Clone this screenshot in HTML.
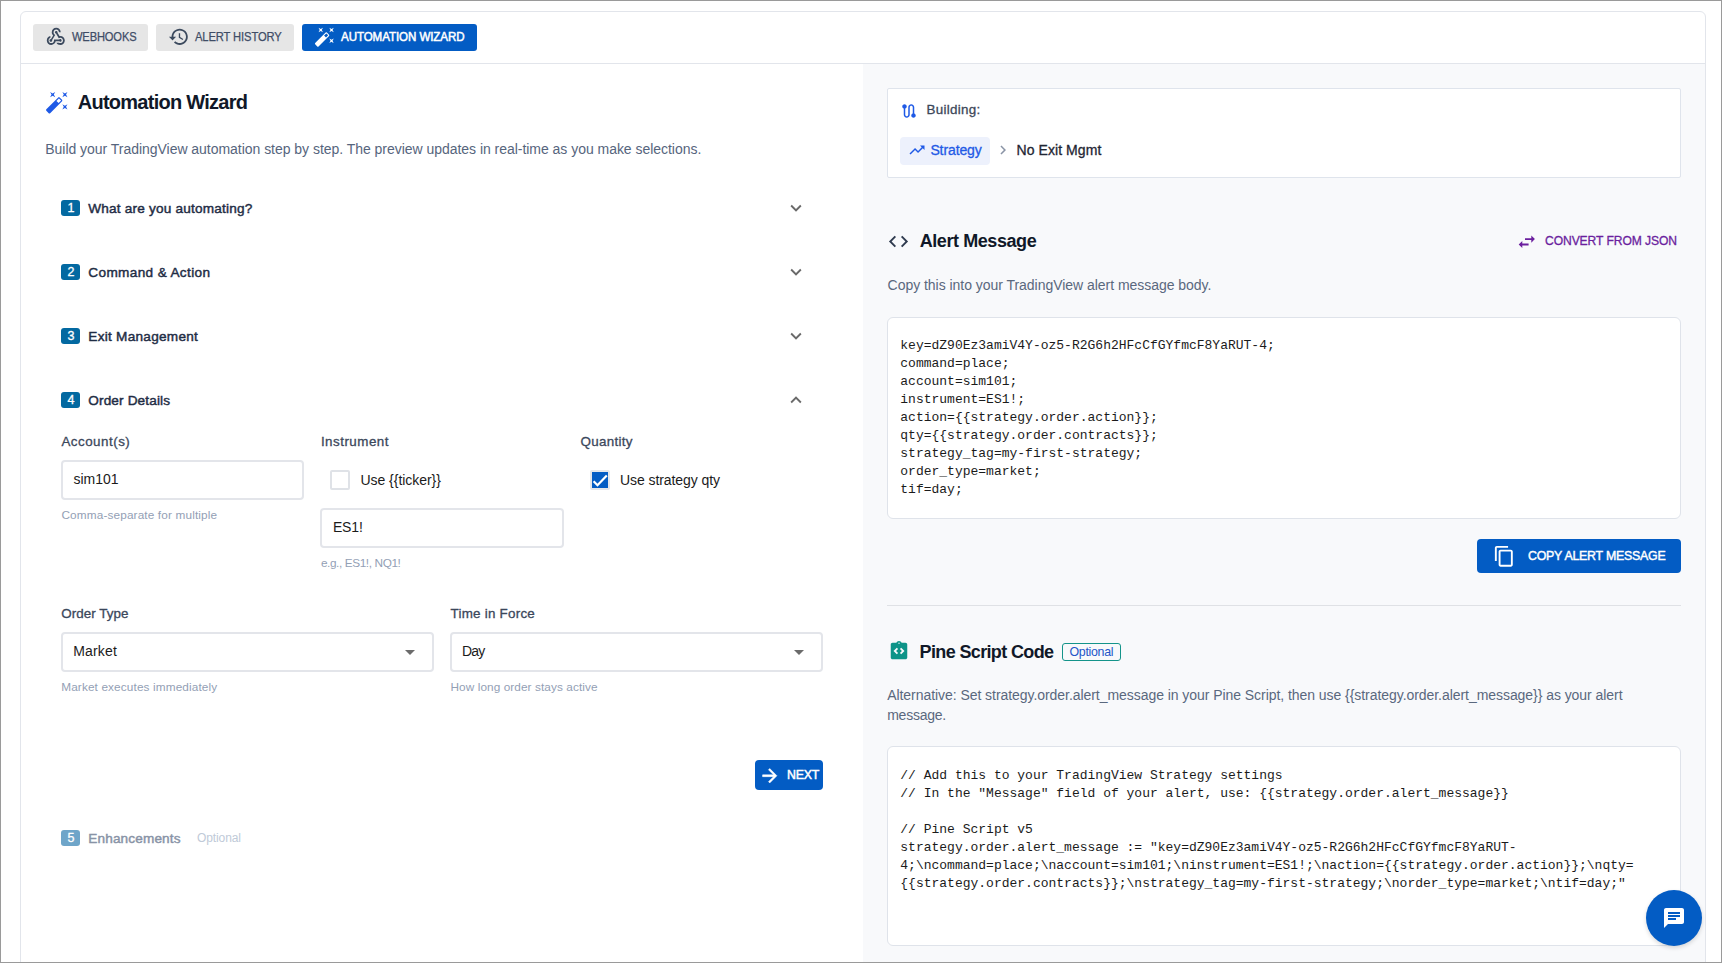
<!DOCTYPE html>
<html><head><meta charset="utf-8">
<style>
*{box-sizing:border-box;margin:0;padding:0}
html,body{width:1722px;height:963px;overflow:hidden;background:#fff;font-family:"Liberation Sans",sans-serif}
.frame{position:absolute;left:0;top:0;width:1722px;height:963px;border:1px solid #9a9a9a;overflow:hidden}
.b{position:absolute}
.t{position:absolute;white-space:pre;line-height:1}
.s{font-family:"Liberation Sans",sans-serif}
.m{font-family:"Liberation Mono",monospace}
.ic{position:absolute;display:block;overflow:visible}
</style></head>
<body>
<div class="frame"></div>
<!-- card -->
<div class="b" style="left:20px;top:11px;width:1686px;height:1000px;border:1px solid #e2e5eb;border-radius:6px;background:#fff"></div>
<div class="b" style="left:21px;top:63px;width:1684px;height:1px;background:#e2e5eb"></div>
<!-- right panel bg -->
<div class="b" style="left:863px;top:64px;width:842px;height:898px;background:#f8f9fb"></div>
<!-- tabs -->
<div class="b" style="left:33px;top:24px;width:115px;height:27px;border-radius:3px;background:#e6e6e6"></div>
<div class="b" style="left:156px;top:24px;width:138px;height:27px;border-radius:3px;background:#e6e6e6"></div>
<div class="b" style="left:302px;top:24px;width:175px;height:27px;border-radius:3px;background:#035cc4"></div>
<!-- badges -->
<div class="b" style="left:61px;top:200px;width:19px;height:16px;border-radius:3px;background:#0369a1"></div>
<div class="b" style="left:61px;top:264px;width:19px;height:16px;border-radius:3px;background:#0369a1"></div>
<div class="b" style="left:61px;top:328px;width:19px;height:16px;border-radius:3px;background:#0369a1"></div>
<div class="b" style="left:61px;top:392px;width:19px;height:16px;border-radius:3px;background:#0369a1"></div>
<div class="b" style="left:61px;top:830px;width:19px;height:16px;border-radius:3px;background:#6ea5c9"></div>
<!-- inputs -->
<div class="b" style="left:61px;top:460px;width:243px;height:40px;border:2px solid #e3e5ea;border-radius:4px;background:#fff"></div>
<div class="b" style="left:330px;top:470px;width:20px;height:20px;border:2px solid #dfe2e7;border-radius:2px;background:#fff"></div>
<div class="b" style="left:320px;top:508px;width:244px;height:40px;border:2px solid #e3e5ea;border-radius:4px;background:#fff"></div>
<div class="b" style="left:61px;top:632px;width:373px;height:40px;border:2px solid #e3e5ea;border-radius:4px;background:#fff"></div>
<div class="b" style="left:450px;top:632px;width:373px;height:40px;border:2px solid #e3e5ea;border-radius:4px;background:#fff"></div>
<svg class="ic" style="left:405px;top:650px;width:10px;height:5px" viewBox="0 0 10 5"><path fill="#6b6b6b" d="M0 0h10L5 5z"/></svg>
<svg class="ic" style="left:794px;top:650px;width:10px;height:5px" viewBox="0 0 10 5"><path fill="#6b6b6b" d="M0 0h10L5 5z"/></svg>
<!-- next -->
<div class="b" style="left:755px;top:760px;width:68px;height:30px;border-radius:4px;background:#035cc4"></div>
<!-- building card -->
<div class="b" style="left:887px;top:88px;width:794px;height:90px;border:1px solid #dfe4ec;border-radius:2px;background:#fff"></div>
<div class="b" style="left:900px;top:137px;width:90px;height:28px;border-radius:4px;background:#edf1fc"></div>
<!-- code box -->
<div class="b" style="left:887px;top:317px;width:794px;height:202px;border:1px solid #dfe3ea;border-radius:6px;background:#fff"></div>
<!-- copy btn -->
<div class="b" style="left:1477px;top:539px;width:204px;height:34px;border-radius:4px;background:#035cc4"></div>
<!-- divider -->
<div class="b" style="left:887px;top:605px;width:794px;height:1px;background:#dfe1e5"></div>
<!-- optional chip -->
<div class="b" style="left:1062px;top:643px;width:59px;height:18px;border:1px solid #14948a;border-radius:3px"></div>
<!-- pine code box -->
<div class="b" style="left:887px;top:746px;width:794px;height:200px;border:1px solid #dfe3ea;border-radius:6px;background:#fff"></div>
<!-- fab -->
<div class="b" style="left:1646px;top:890px;width:56px;height:56px;border-radius:50%;background:#035cc4;box-shadow:0 2px 4px rgba(0,0,0,.15)"></div>
<svg class="ic" style="left:1662px;top:906px;width:24px;height:24px" viewBox="0 0 24 24"><path fill="#fff" d="M20 2H4c-1.1 0-1.99.9-1.99 2L2 22l4-4h14c1.1 0 2-.9 2-2V4c0-1.1-.9-2-2-2zM6 9h12v2H6V9zm8 5H6v-2h8v2zm4-6H6V6h12v2z"/></svg>
<svg class="ic" style="left:45px;top:26px;width:21.6px;height:21.6px" viewBox="0 0 24 24"><path fill="#3c4a5e" style="" d="M10 15h5.88c.27-.31.67-.5 1.12-.5.83 0 1.5.67 1.5 1.5 0 .83-.67 1.5-1.5 1.5-.44 0-.84-.19-1.12-.5H11.9c-.46 2.28-2.48 4-4.9 4-2.76 0-5-2.24-5-5 0-2.42 1.72-4.44 4-4.9v2.07c-1.16.41-2 1.53-2 2.83 0 1.65 1.35 3 3 3s3-1.35 3-3v-1zm2.5-11c1.65 0 3 1.35 3 3h2c0-2.76-2.24-5-5-5s-5 2.24-5 5c0 1.43.6 2.71 1.55 3.62l-2.35 3.9C5.52 14.66 5 15.27 5 16c0 .83.67 1.5 1.5 1.5S8 16.830 8 16c0-.16-.02-.31-.07-.45l3.38-5.63C10.49 9.61 9.5 8.42 9.5 7c0-1.65 1.35-3 3-3zm4.5 9c-.64 0-1.23.2-1.72.54l-3.05-5.07C11.53 8.35 11 7.74 11 7c0-.83.67-1.5 1.5-1.5S14 6.17 14 7c0 .15-.02.29-.06.43l2.19 3.65c.28-.05.57-.08.87-.08 2.76 0 5 2.24 5 5s-2.24 5-5 5c-1.85 0-3.47-1.01-4.33-2.5h2.67c.48.32 1.05.5 1.66.5 1.65 0 3-1.35 3-3s-1.35-3-3-3z"/></svg>
<svg class="ic" style="left:168.1px;top:25.5px;width:21.6px;height:21.6px" viewBox="0 0 24 24"><path fill="#3c4a5e" style="" d="M13 3c-4.97 0-9 4.03-9 9H1l3.89 3.89.07.14L9 12H6c0-3.87 3.13-7 7-7s7 3.13 7 7-3.13 7-7 7c-1.93 0-3.68-.79-4.94-2.06l-1.42 1.42C8.27 19.99 10.51 21 13 21c4.97 0 9-4.03 9-9s-4.03-9-9-9zm-1 5v5l4.28 2.54.72-1.21-3.5-2.08V8H12z"/></svg>
<svg class="ic" style="left:314px;top:26px;width:21.6px;height:21.6px" viewBox="0 0 24 24"><path fill="#ffffff" style="" d="M7.5 5.6 10 7 8.6 4.5 10 2 7.5 3.4 5 2l1.4 2.5L5 7zm12 9.8L17 14l1.4 2.5L17 19l2.5-1.4L22 19l-1.4-2.5L22 14zM22 2l-2.5 1.4L17 2l1.4 2.5L17 7l2.5-1.4L22 7l-1.4-2.5zm-7.63 5.29a.9959.9959 0 0 0-1.41 0L1.29 18.96c-.39.39-.39 1.02 0 1.41l2.34 2.34c.39.39 1.02.39 1.41 0L16.7 11.05c.39-.39.39-1.02 0-1.41l-2.33-2.35zm-1.03 5.49-2.12-2.12 2.44-2.44 2.12 2.12-2.44 2.44z"/></svg>
<svg class="ic" style="left:45.1px;top:89.8px;width:24.5px;height:24.5px" viewBox="0 0 24 24"><path fill="#1f5ae6" style="" d="M7.5 5.6 10 7 8.6 4.5 10 2 7.5 3.4 5 2l1.4 2.5L5 7zm12 9.8L17 14l1.4 2.5L17 19l2.5-1.4L22 19l-1.4-2.5L22 14zM22 2l-2.5 1.4L17 2l1.4 2.5L17 7l2.5-1.4L22 7l-1.4-2.5zm-7.63 5.29a.9959.9959 0 0 0-1.41 0L1.29 18.96c-.39.39-.39 1.02 0 1.41l2.34 2.34c.39.39 1.02.39 1.41 0L16.7 11.05c.39-.39.39-1.02 0-1.41l-2.33-2.35zm-1.03 5.49-2.12-2.12 2.44-2.44 2.12 2.12-2.44 2.44z"/></svg>
<svg class="ic" style="left:785.4px;top:197.2px;width:22px;height:22px" viewBox="0 0 24 24"><path fill="#6a6a6a" style="" d="M16.59 8.59 12 13.17 7.41 8.59 6 10l6 6 6-6z"/></svg>
<svg class="ic" style="left:785.4px;top:261.2px;width:22px;height:22px" viewBox="0 0 24 24"><path fill="#6a6a6a" style="" d="M16.59 8.59 12 13.17 7.41 8.59 6 10l6 6 6-6z"/></svg>
<svg class="ic" style="left:785.4px;top:325.2px;width:22px;height:22px" viewBox="0 0 24 24"><path fill="#6a6a6a" style="" d="M16.59 8.59 12 13.17 7.41 8.59 6 10l6 6 6-6z"/></svg>
<svg class="ic" style="left:785.4px;top:388.6px;width:22px;height:22px" viewBox="0 0 24 24"><path fill="#6a6a6a" style="" d="m12 8-6 6 1.41 1.41L12 10.83l4.59 4.58L18 14z"/></svg>
<svg class="ic" style="left:900.1px;top:102px;width:18px;height:18px" viewBox="0 0 24 24"><path fill="#1f5ae6" style="" d="M19 15.18V7c0-2.21-1.79-4-4-4s-4 1.79-4 4v10c0 1.1-.9 2-2 2s-2-.9-2-2V8.82C8.16 8.4 9 7.3 9 6c0-1.66-1.34-3-3-3S3 4.34 3 6c0 1.3.84 2.4 2 2.82V17c0 2.21 1.79 4 4 4s4-1.79 4-4V7c0-1.1.9-2 2-2s2 .9 2 2v8.18c-1.16.41-2 1.51-2 2.82 0 1.66 1.34 3 3 3s3-1.34 3-3c0-1.3-.84-2.4-2-2.82z"/></svg>
<svg class="ic" style="left:908.3px;top:141.4px;width:18px;height:18px" viewBox="0 0 24 24"><path fill="#1f5ae6" style="" d="m16 6 2.29 2.29-4.88 4.88-4-4L2 16.59 3.41 18l6-6 4 4 6.3-6.29L22 12V6z"/></svg>
<svg class="ic" style="left:994px;top:141px;width:18px;height:18px" viewBox="0 0 24 24"><path fill="#8a94a6" style="" d="M10 6 8.59 7.41 13.17 12l-4.58 4.59L10 18l6-6z"/></svg>
<svg class="ic" style="left:886.9px;top:229.5px;width:23px;height:23px" viewBox="0 0 24 24"><path fill="#2f3b4f" style="" d="M9.4 16.6 4.8 12l4.6-4.6L8 6l-6 6 6 6 1.4-1.4zm5.2 0 4.6-4.6-4.6-4.6L16 6l6 6-6 6-1.4-1.4z"/></svg>
<svg class="ic" style="left:1516px;top:230.7px;width:21.6px;height:21.6px" viewBox="0 0 24 24"><path fill="#6b1f9e" style="" d="M6.99 11 3 15l3.99 4v-3H14v-2H6.99v-3zM21 9l-3.99-4v3H10v2h7.01v3L21 9z"/></svg>
<svg class="ic" style="left:1492.8px;top:544.7px;width:22.6px;height:22.6px" viewBox="0 0 24 24"><path fill="#ffffff" style="" d="M16 1H4c-1.1 0-2 .9-2 2v14h2V3h12V1zm3 4H8c-1.1 0-2 .9-2 2v14c0 1.1.9 2 2 2h11c1.1 0 2-.9 2-2V7c0-1.1-.9-2-2-2zm0 16H8V7h11v14z"/></svg>
<svg class="ic" style="left:887.5px;top:639.5px;width:22px;height:22px" viewBox="0 0 24 24"><path fill="#0d9488" style="" d="M19 3h-4.18C14.4 1.84 13.3 1 12 1c-1.3 0-2.4.84-2.82 2H5c-1.1 0-2 .9-2 2v14c0 1.1.9 2 2 2h14c1.1 0 2-.9 2-2V5c0-1.1-.9-2-2-2zm-8 11.17-1.41 1.42L6 12l3.59-3.59L11 9.83 8.83 12 11 14.17zm1-9.92c-.41 0-.75-.34-.75-.75s.34-.75.75-.75.75.34.75.75-.34.75-.75.75zm2.41 11.34L13 14.17 15.17 12 13 9.83l1.41-1.42L18 12l-3.59 3.59z"/></svg>
<svg class="ic" style="left:758.6px;top:764.5px;width:21.5px;height:21.5px" viewBox="0 0 24 24"><path fill="#ffffff" style="stroke:#fff;stroke-width:0.6" d="m12 4-1.41 1.41L16.17 11H4v2h12.17l-5.58 5.59L12 20l8-8z"/></svg>
<div class="b" style="left:590px;top:470px;width:20px;height:20px;border:2px solid #e4e6ea;border-radius:2px;background:#035cc4"></div>
<svg class="ic" style="left:586px;top:466px;width:28px;height:28px" viewBox="0 0 28 28"><path d="M7.6 15.2 11.5 19.2 20.8 9.4" fill="none" stroke="#fff" stroke-width="2.2"/></svg>
<div class="t s" style="left:72.0px;top:31.07px;font-size:12.2px;font-weight:normal;color:#3f4d66;letter-spacing:-0.161px;-webkit-text-stroke:0.25px #3f4d66;transform:scaleX(0.9143);transform-origin:0 0;">WEBHOOKS</div>
<div class="t s" style="left:195.4px;top:31.07px;font-size:12.2px;font-weight:normal;color:#3f4d66;letter-spacing:-0.120px;-webkit-text-stroke:0.25px #3f4d66;transform:scaleX(0.9182);transform-origin:0 0;">ALERT HISTORY</div>
<div class="t s" style="left:341.1px;top:31.27px;font-size:12.2px;font-weight:normal;color:#ffffff;letter-spacing:-0.077px;-webkit-text-stroke:0.5px #ffffff;transform:scaleX(0.9482);transform-origin:0 0;">AUTOMATION WIZARD</div>
<div class="t s" style="left:77.7px;top:92.07px;font-size:20px;font-weight:bold;color:#101828;letter-spacing:-0.733px;">Automation Wizard</div>
<div class="t s" style="left:45.3px;top:142.25px;font-size:14px;font-weight:normal;color:#56657d;letter-spacing:-0.033px;">Build your TradingView automation step by step. The preview updates in real-time as you make selections.</div>
<div class="t s" style="left:88.3px;top:201.59px;font-size:13.6px;font-weight:normal;color:#1f2d45;letter-spacing:0.198px;-webkit-text-stroke:0.45px #1f2d45;">What are you automating?</div>
<div class="t s" style="left:67.6px;top:201.62px;font-size:12.5px;font-weight:normal;color:#ffffff;letter-spacing:0.000px;-webkit-text-stroke:0.3px #ffffff;">1</div>
<div class="t s" style="left:88.3px;top:265.59px;font-size:13.6px;font-weight:normal;color:#1f2d45;letter-spacing:0.356px;-webkit-text-stroke:0.45px #1f2d45;">Command &amp; Action</div>
<div class="t s" style="left:67.6px;top:265.62px;font-size:12.5px;font-weight:normal;color:#ffffff;letter-spacing:0.000px;-webkit-text-stroke:0.3px #ffffff;">2</div>
<div class="t s" style="left:88.3px;top:329.59px;font-size:13.6px;font-weight:normal;color:#1f2d45;letter-spacing:0.272px;-webkit-text-stroke:0.45px #1f2d45;">Exit Management</div>
<div class="t s" style="left:67.6px;top:329.62px;font-size:12.5px;font-weight:normal;color:#ffffff;letter-spacing:0.000px;-webkit-text-stroke:0.3px #ffffff;">3</div>
<div class="t s" style="left:88.3px;top:393.59px;font-size:13.6px;font-weight:normal;color:#1f2d45;letter-spacing:0.135px;-webkit-text-stroke:0.45px #1f2d45;">Order Details</div>
<div class="t s" style="left:67.6px;top:393.62px;font-size:12.5px;font-weight:normal;color:#ffffff;letter-spacing:0.000px;-webkit-text-stroke:0.3px #ffffff;">4</div>
<div class="t s" style="left:61.4px;top:434.56px;font-size:13.4px;font-weight:normal;color:#3b475b;letter-spacing:0.489px;-webkit-text-stroke:0.3px #3b475b;">Account(s)</div>
<div class="t s" style="left:320.9px;top:434.56px;font-size:13.4px;font-weight:normal;color:#3b475b;letter-spacing:0.482px;-webkit-text-stroke:0.3px #3b475b;">Instrument</div>
<div class="t s" style="left:580.5px;top:434.56px;font-size:13.4px;font-weight:normal;color:#3b475b;letter-spacing:0.304px;-webkit-text-stroke:0.3px #3b475b;">Quantity</div>
<div class="t s" style="left:73.5px;top:472.35px;font-size:14px;font-weight:normal;color:#1b1b1b;letter-spacing:-0.008px;">sim101</div>
<div class="t s" style="left:61.4px;top:509.81px;font-size:11.8px;font-weight:normal;color:#93a0b5;letter-spacing:0.138px;">Comma-separate for multiple</div>
<div class="t s" style="left:360.5px;top:472.95px;font-size:14px;font-weight:normal;color:#1b1b1b;letter-spacing:-0.041px;">Use {{ticker}}</div>
<div class="t s" style="left:620.0px;top:472.95px;font-size:14px;font-weight:normal;color:#1b1b1b;letter-spacing:-0.077px;">Use strategy qty</div>
<div class="t s" style="left:332.9px;top:520.35px;font-size:14px;font-weight:normal;color:#1b1b1b;letter-spacing:-0.120px;">ES1!</div>
<div class="t s" style="left:320.9px;top:558.01px;font-size:11.8px;font-weight:normal;color:#93a0b5;letter-spacing:-0.394px;">e.g., ES1!, NQ1!</div>
<div class="t s" style="left:61.2px;top:606.96px;font-size:13.4px;font-weight:normal;color:#3b475b;letter-spacing:0.061px;-webkit-text-stroke:0.3px #3b475b;">Order Type</div>
<div class="t s" style="left:450.5px;top:606.96px;font-size:13.4px;font-weight:normal;color:#3b475b;letter-spacing:0.245px;-webkit-text-stroke:0.3px #3b475b;">Time in Force</div>
<div class="t s" style="left:73.2px;top:644.35px;font-size:14px;font-weight:normal;color:#1b1b1b;letter-spacing:0.181px;">Market</div>
<div class="t s" style="left:462.0px;top:644.35px;font-size:14px;font-weight:normal;color:#1b1b1b;letter-spacing:-0.803px;">Day</div>
<div class="t s" style="left:61.2px;top:682.41px;font-size:11.8px;font-weight:normal;color:#93a0b5;letter-spacing:0.124px;">Market executes immediately</div>
<div class="t s" style="left:450.5px;top:682.41px;font-size:11.8px;font-weight:normal;color:#93a0b5;letter-spacing:0.081px;">How long order stays active</div>
<div class="t s" style="left:787.2px;top:767.90px;font-size:13px;font-weight:normal;color:#ffffff;letter-spacing:-0.254px;-webkit-text-stroke:0.5px #ffffff;transform:scaleX(0.9495);transform-origin:0 0;">NEXT</div>
<div class="t s" style="left:88.3px;top:831.59px;font-size:13.6px;font-weight:normal;color:#8893a6;letter-spacing:0.138px;-webkit-text-stroke:0.45px #8893a6;">Enhancements</div>
<div class="t s" style="left:67.6px;top:831.62px;font-size:12.5px;font-weight:normal;color:#ffffff;letter-spacing:0.000px;-webkit-text-stroke:0.3px #ffffff;">5</div>
<div class="t s" style="left:197.0px;top:832.24px;font-size:12px;font-weight:normal;color:#c0cad8;letter-spacing:-0.100px;">Optional</div>
<div class="t s" style="left:926.5px;top:103.46px;font-size:13.4px;font-weight:normal;color:#3c4759;letter-spacing:0.303px;-webkit-text-stroke:0.3px #3c4759;">Building:</div>
<div class="t s" style="left:930.4px;top:143.25px;font-size:14px;font-weight:normal;color:#1f5ae6;letter-spacing:-0.106px;-webkit-text-stroke:0.3px #1f5ae6;">Strategy</div>
<div class="t s" style="left:1016.6px;top:143.25px;font-size:14px;font-weight:normal;color:#1f2633;letter-spacing:0.062px;-webkit-text-stroke:0.3px #1f2633;">No Exit Mgmt</div>
<div class="t s" style="left:919.7px;top:232.06px;font-size:18px;font-weight:bold;color:#101828;letter-spacing:-0.422px;">Alert Message</div>
<div class="t s" style="left:1544.7px;top:234.90px;font-size:12.4px;font-weight:normal;color:#6b1f9e;letter-spacing:-0.086px;-webkit-text-stroke:0.3px #6b1f9e;transform:scaleX(0.9766);transform-origin:0 0;">CONVERT FROM JSON</div>
<div class="t s" style="left:887.6px;top:277.55px;font-size:14px;font-weight:normal;color:#5a687e;letter-spacing:-0.035px;">Copy this into your TradingView alert message body.</div>
<div class="t s" style="left:1527.7px;top:549.23px;font-size:13.2px;font-weight:normal;color:#ffffff;letter-spacing:-0.242px;-webkit-text-stroke:0.45px #ffffff;transform:scaleX(0.9375);transform-origin:0 0;">COPY ALERT MESSAGE</div>
<div class="t s" style="left:919.6px;top:642.86px;font-size:18px;font-weight:bold;color:#101828;letter-spacing:-0.642px;">Pine Script Code</div>
<div class="t s" style="left:1069.5px;top:646.10px;font-size:12.4px;font-weight:normal;color:#2455c8;letter-spacing:-0.308px;">Optional</div>
<div class="t s" style="left:887.2px;top:688.45px;font-size:14px;font-weight:normal;color:#5a687e;letter-spacing:-0.054px;">Alternative: Set strategy.order.alert_message in your Pine Script, then use {{strategy.order.alert_message}} as your alert</div>
<div class="t s" style="left:887.2px;top:708.15px;font-size:14px;font-weight:normal;color:#5a687e;letter-spacing:-0.243px;">message.</div>
<div class="t m" style="left:900.3px;top:338.54px;font-size:13px;color:#1b1b1b">key=dZ90Ez3amiV4Y-oz5-R2G6h2HFcCfGYfmcF8YaRUT-4;</div>
<div class="t m" style="left:900.3px;top:356.54px;font-size:13px;color:#1b1b1b">command=place;</div>
<div class="t m" style="left:900.3px;top:374.54px;font-size:13px;color:#1b1b1b">account=sim101;</div>
<div class="t m" style="left:900.3px;top:392.54px;font-size:13px;color:#1b1b1b">instrument=ES1!;</div>
<div class="t m" style="left:900.3px;top:410.54px;font-size:13px;color:#1b1b1b">action={{strategy.order.action}};</div>
<div class="t m" style="left:900.3px;top:428.54px;font-size:13px;color:#1b1b1b">qty={{strategy.order.contracts}};</div>
<div class="t m" style="left:900.3px;top:446.54px;font-size:13px;color:#1b1b1b">strategy_tag=my-first-strategy;</div>
<div class="t m" style="left:900.3px;top:464.54px;font-size:13px;color:#1b1b1b">order_type=market;</div>
<div class="t m" style="left:900.3px;top:482.54px;font-size:13px;color:#1b1b1b">tif=day;</div>
<div class="t m" style="left:900.3px;top:768.54px;font-size:13px;color:#1b1b1b">// Add this to your TradingView Strategy settings</div>
<div class="t m" style="left:900.3px;top:786.54px;font-size:13px;color:#1b1b1b">// In the "Message" field of your alert, use: {{strategy.order.alert_message}}</div>
<div class="t m" style="left:900.3px;top:822.54px;font-size:13px;color:#1b1b1b">// Pine Script v5</div>
<div class="t m" style="left:900.3px;top:840.54px;font-size:13px;color:#1b1b1b">strategy.order.alert_message := "key=dZ90Ez3amiV4Y-oz5-R2G6h2HFcCfGYfmcF8YaRUT-</div>
<div class="t m" style="left:900.3px;top:858.54px;font-size:13px;color:#1b1b1b">4;\ncommand=place;\naccount=sim101;\ninstrument=ES1!;\naction={{strategy.order.action}};\nqty=</div>
<div class="t m" style="left:900.3px;top:876.54px;font-size:13px;color:#1b1b1b">{{strategy.order.contracts}};\nstrategy_tag=my-first-strategy;\norder_type=market;\ntif=day;"</div>
<div class="frame" style="background:transparent;z-index:10"></div>
</body></html>
